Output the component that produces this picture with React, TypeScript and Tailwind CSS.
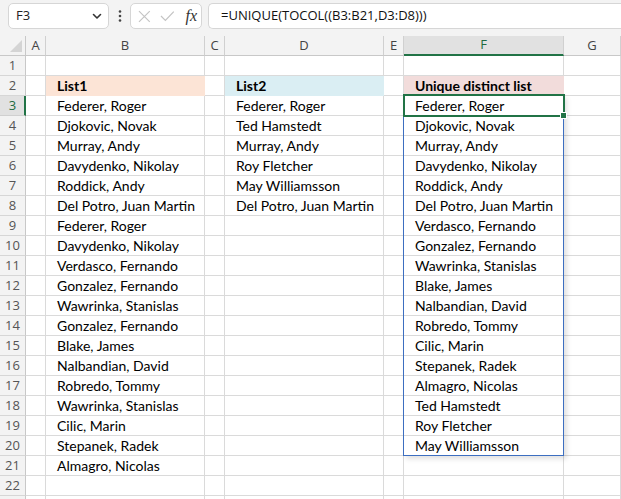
import React from "react";

const colB: Record<number, string> = {
  3: "Federer, Roger",
  4: "Djokovic, Novak",
  5: "Murray, Andy",
  6: "Davydenko, Nikolay",
  7: "Roddick, Andy",
  8: "Del Potro, Juan Martin",
  9: "Federer, Roger",
  10: "Davydenko, Nikolay",
  11: "Verdasco, Fernando",
  12: "Gonzalez, Fernando",
  13: "Wawrinka, Stanislas",
  14: "Gonzalez, Fernando",
  15: "Blake, James",
  16: "Nalbandian, David",
  17: "Robredo, Tommy",
  18: "Wawrinka, Stanislas",
  19: "Cilic, Marin",
  20: "Stepanek, Radek",
  21: "Almagro, Nicolas",
};

const colD: Record<number, string> = {
  3: "Federer, Roger",
  4: "Ted Hamstedt",
  5: "Murray, Andy",
  6: "Roy Fletcher",
  7: "May Williamsson",
  8: "Del Potro, Juan Martin",
};

const fList = [
  "Federer, Roger",
  "Djokovic, Novak",
  "Murray, Andy",
  "Davydenko, Nikolay",
  "Roddick, Andy",
  "Del Potro, Juan Martin",
  "Verdasco, Fernando",
  "Gonzalez, Fernando",
  "Wawrinka, Stanislas",
  "Blake, James",
  "Nalbandian, David",
  "Robredo, Tommy",
  "Cilic, Marin",
  "Stepanek, Radek",
  "Almagro, Nicolas",
  "Ted Hamstedt",
  "Roy Fletcher",
  "May Williamsson",
];

const colF: Record<number, string> = {};
fList.forEach((v, i) => (colF[i + 3] = v));

const cellFont = { fontFamily: "Lato, 'Open Sans', sans-serif" };

function Cell({ text, bold, fill }: { text?: string; bold?: boolean; fill?: string }) {
  return (
    <div
      className={`h-[20px] border-r border-b pl-[11px] flex items-center whitespace-nowrap overflow-visible text-[14px] text-black ${
        bold ? "font-bold" : ""
      } ${fill ?? "border-[#dadada] bg-white"}`}
      style={cellFont}
    >
      {text}
    </div>
  );
}

function Empty() {
  return <div className="h-[20px] border-r border-b border-[#dadada] bg-white" />;
}

export default function App() {
  const rows = Array.from({ length: 23 }, (_, i) => i + 1);
  return (
    <div className="w-[621px] h-[499px] overflow-hidden bg-white" style={{ fontFamily: "'Open Sans', 'Noto Sans', sans-serif" }}>
      {/* Formula bar */}
      <div className="h-[36px] bg-[#f3f3f3] flex items-start pt-[3px]">
        <div className="ml-[8px] w-[101px] h-[26px] bg-white border border-[#d6d6d6] rounded-[5px] flex items-center justify-between pl-[7px] pr-[5px]">
          <span className="text-[13px] text-[#222]">F3</span>
          <svg width="12" height="12" viewBox="0 0 12 12">
            <path d="M2.5 4.5 L6 8 L9.5 4.5" fill="none" stroke="#333" strokeWidth="1.6" strokeLinecap="round" strokeLinejoin="round" />
          </svg>
        </div>
        <div className="w-[21px] h-[26px] flex items-center justify-center">
          <svg width="4" height="14" viewBox="0 0 4 14">
            <circle cx="2" cy="2.5" r="1.3" fill="#444" />
            <circle cx="2" cy="7" r="1.3" fill="#444" />
            <circle cx="2" cy="11.5" r="1.3" fill="#444" />
          </svg>
        </div>
        <div className="w-[72px] h-[26px] bg-white border border-[#d6d6d6] rounded-[5px] flex items-center pl-[7px] pr-[4px] gap-[9px]">
          <svg width="13" height="13" viewBox="0 0 13 13">
            <path d="M1 1 L12 12 M12 1 L1 12" stroke="#c4c4c4" strokeWidth="1.2" fill="none" />
          </svg>
          <svg width="15" height="12" viewBox="0 0 15 12">
            <path d="M1 6 L5.5 10.5 L14 1.5" stroke="#c4c4c4" strokeWidth="1.2" fill="none" />
          </svg>
          <span className="italic text-[16px] text-[#333] leading-none ml-[2px]" style={{ fontFamily: "'Liberation Serif', serif" }}>
            fx
          </span>
        </div>
        <div className="ml-[6px] flex-1 h-[26px] bg-white border border-r-0 border-[#d6d6d6] rounded-l-[5px] flex items-center pl-[12px]">
          <span className="text-[13px] text-[#111]">=UNIQUE(TOCOL((B3:B21,D3:D8)))</span>
        </div>
      </div>

      {/* Grid */}
      <div className="relative">
        <div className="grid grid-cols-[26px_20px_159px_20px_159px_20px_160px_1fr]">
          {/* Column headers */}
          <div className="h-[20px] bg-[#f3f3f3] border-r border-b border-[#c8c8c8] relative">
            <svg className="absolute right-[3px] bottom-[3px]" width="12" height="12" viewBox="0 0 12 12">
              <path d="M12 0 L12 12 L0 12 Z" fill="#d4d4d4" />
            </svg>
          </div>
          {["A", "B", "C", "D", "E", "F", "G"].map((c) =>
            c === "F" ? (
              <div
                key={c}
                className="h-[20px] bg-[#e1e1e1] border-r border-[#d0d0d0] border-b-2 border-b-[#217346] flex items-center justify-center text-[13px] text-[#1e6b40]"
              >
                {c}
              </div>
            ) : (
              <div
                key={c}
                className="h-[20px] bg-[#f3f3f3] border-r border-b border-[#d0d0d0] border-b-[#c8c8c8] flex items-center justify-center text-[13px] text-[#444]"
              >
                {c}
              </div>
            )
          )}

          {rows.map((r) => (
            <React.Fragment key={r}>
              {r === 3 ? (
                <div className="h-[20px] bg-[#e1e1e1] border-r-2 border-r-[#217346] border-b border-b-[#d0d0d0] flex items-center justify-center text-[13px] text-[#1e6b40] pl-[1px]">
                  {r}
                </div>
              ) : (
                <div className="h-[20px] bg-[#f3f3f3] border-r border-b border-[#d6d6d6] border-r-[#c8c8c8] flex items-center justify-center text-[13px] text-[#555]">
                  {r < 23 ? r : ""}
                </div>
              )}
              <Empty />
              {r === 2 ? (
                <Cell text="List1" bold fill="bg-[#fce4d6] border-[#fce4d6]" />
              ) : (
                <Cell text={colB[r]} />
              )}
              <Empty />
              {r === 2 ? (
                <Cell text="List2" bold fill="bg-[#daeef3] border-[#daeef3]" />
              ) : (
                <Cell text={colD[r]} />
              )}
              <Empty />
              {r === 2 ? (
                <Cell text="Unique distinct list" bold fill="bg-[#f2dcdb] border-[#f2dcdb]" />
              ) : (
                <Cell text={colF[r]} />
              )}
              <Empty />
            </React.Fragment>
          ))}
        </div>

        {/* Spill range border */}
        <div className="absolute left-[403px] top-[59px] w-[161px] h-[361px] border border-[#3c6ec0] shadow-[3px_3px_5px_rgba(0,0,0,0.12)] pointer-events-none" />
        {/* Active cell */}
        <div className="absolute left-[403px] top-[58px] w-[162px] h-[23px] border-2 border-[#217346] pointer-events-none" />
        <div className="absolute left-[560px] top-[76px] w-[7px] h-[7px] bg-[#217346] border border-white pointer-events-none" />
      </div>
    </div>
  );
}
